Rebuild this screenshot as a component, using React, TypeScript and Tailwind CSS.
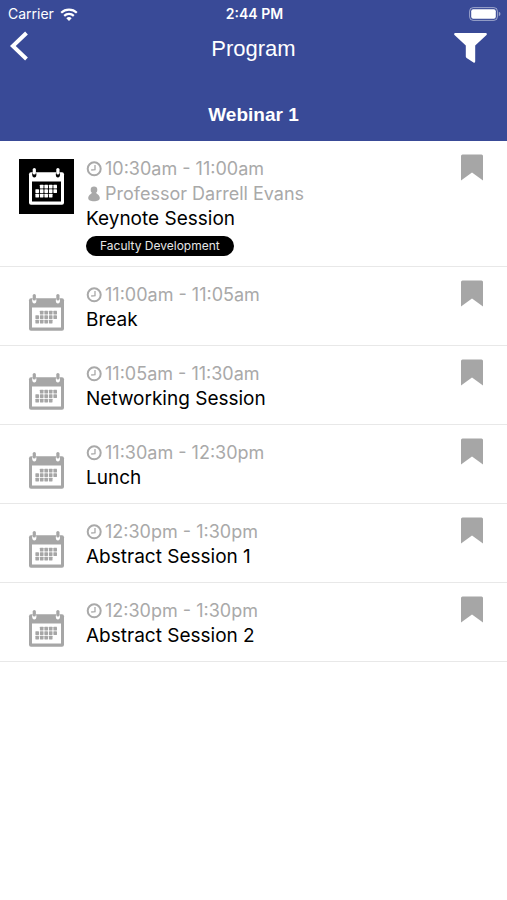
import React, { useState } from "react";

type Session = {
  id: number;
  time: string;
  title: string;
  speaker?: string;
  tag?: string;
};

const sessions: Session[] = [
  {
    id: 1,
    time: "10:30am - 11:00am",
    title: "Keynote Session",
    speaker: "Professor Darrell Evans",
    tag: "Faculty Development",
  },
  { id: 2, time: "11:00am - 11:05am", title: "Break" },
  { id: 3, time: "11:05am - 11:30am", title: "Networking Session" },
  { id: 4, time: "11:30am - 12:30pm", title: "Lunch" },
  { id: 5, time: "12:30pm - 1:30pm", title: "Abstract Session 1" },
  { id: 6, time: "12:30pm - 1:30pm", title: "Abstract Session 2" },
];

// day cells of the calendar, as [column, row]
const days = [
  [1, 0], [2, 0], [3, 0], [4, 0],
  [0, 1], [1, 1], [2, 1], [3, 1], [4, 1],
  [0, 2], [1, 2], [2, 2], [3, 2],
];

const CalendarIcon = ({ active }: { active: boolean }) => {
  const ink = active ? "#ffffff" : "#a6a6a6";
  const paper = active ? "#000000" : "#ffffff";

  return (
    <svg viewBox="0 0 55 55" className="size-[55px] shrink-0" aria-hidden="true">
      <rect width="55" height="55" fill={paper} />
      <rect x="10" y="13.2" width="35" height="32.6" rx="2" fill={ink} />
      <rect x="13" y="22.5" width="29" height="20" fill={paper} />
      {[15.3, 38.9].map((x) => (
        <g key={x}>
          <ellipse cx={x} cy="15.4" rx="2.1" ry="3" fill={paper} />
          <rect x={x - 1.6} y="9" width="3.2" height="6.6" rx="1.6" fill={ink} />
        </g>
      ))}
      {days.map(([col, row]) => (
        <rect
          key={`${col}-${row}`}
          x={16.4 + col * 4.5}
          y={25.8 + row * 4.5}
          width="3.6"
          height="3.6"
          rx="0.4"
          fill={ink}
        />
      ))}
    </svg>
  );
};

const ClockIcon = () => (
  <svg viewBox="0 0 16 16" className="size-4 shrink-0" fill="none" stroke="currentColor" aria-hidden="true">
    <circle cx="8.2" cy="7.8" r="6.5" strokeWidth="2" />
    <path d="M9 4v4.600L5.200 9" strokeWidth="1.3" />
  </svg>
);

const PersonIcon = () => (
  <svg viewBox="0 0 16 16" className="size-4 shrink-0" fill="currentColor" aria-hidden="true">
    <circle cx="8" cy="3.9" r="3.3" />
    <path d="M6.200 6.200h3.600c0.200 0.900 0.800 1.300 1.800 2 1.300 0.900 2.200 2.200 2.200 3.800 0 2.400-2.400 3.200-5.800 3.200s-5.800-0.800-5.800-3.200c0-1.600 0.900-2.900 2.200-3.800 1-0.700 1.600-1.100 1.800-2z" />
  </svg>
);

const StatusBar = () => (
  <div className="grid grid-cols-3 items-center h-7 pl-2 pr-1.5 text-sm">
    <div className="flex items-center gap-1.5">
      <span>Carrier</span>
      <svg viewBox="0 0 18 13" className="w-[18px] h-[13px]" fill="none" stroke="currentColor" strokeWidth="2.2" aria-hidden="true">
        <path d="M1.200 4.700a11.200 11.200 0 0 1 15.600 0" />
        <path d="M4.200 7.900a6.900 6.900 0 0 1 9.600 0" />
        <path d="M9 13L6.300 10.200a3.900 3.900 0 0 1 5.400 0z" fill="currentColor" stroke="none" />
      </svg>
    </div>
    <span className="text-center font-semibold">2:44 PM</span>
    <svg viewBox="0 0 32 14" className="w-8 h-3.5 justify-self-end" aria-hidden="true">
      <rect x="0.600" y="0.600" width="27.800" height="12.800" rx="3.600" fill="none" stroke="#ffffff" strokeOpacity="0.5" />
      <rect x="2.200" y="2.200" width="24.600" height="9.600" rx="2" fill="#ffffff" />
      <path d="M29.800 4.800q1.700 0.600 1.700 2.200t-1.700 2.200z" fill="#ffffff" fillOpacity="0.5" />
    </svg>
  </div>
);

const SessionRow = ({ session }: { session: Session }) => {
  const [saved, setSaved] = useState(false);

  return (
    <li className="flex items-start border-b border-[#e8e8e8] pl-[19px] pr-6">
      <div className="pt-[18px]">
        <CalendarIcon active={Boolean(session.tag)} />
      </div>

      <div className={`flex-1 min-w-0 pl-3 pt-[15px] ${session.tag ? "pb-2.5" : "pb-[13px]"}`}>
        <p className="flex items-center gap-[3px] text-lg leading-[25px] text-[#a9a9a9]">
          <ClockIcon />
          {session.time}
        </p>
        {session.speaker && (
          <p className="flex items-center gap-[3px] text-lg leading-[25px] text-[#a9a9a9]">
            <PersonIcon />
            {session.speaker}
          </p>
        )}
        <h2 className="text-[19px] leading-[25px] text-black">{session.title}</h2>
        {session.tag && (
          <span className="mt-[5px] flex w-fit items-center h-5 px-3.5 rounded-full bg-black text-xs text-[#e6e6e6]">
            {session.tag}
          </span>
        )}
      </div>

      <button
        type="button"
        aria-label={`Bookmark ${session.title}`}
        aria-pressed={saved}
        onClick={() => setSaved(!saved)}
        className={`mt-[13px] ${saved ? "text-[#394a97]" : "text-[#a6a6a6]"}`}
      >
        <svg viewBox="0 0 22 27" className="w-[22px] h-[27px]" fill="currentColor" aria-hidden="true">
          <path d="M1.500 0.500h19Q22 0.500 22 2V26.500L11 18.400 0 26.500V2Q0 0.500 1.500 0.500z" />
        </svg>
      </button>
    </li>
  );
};

const App = () => {
  return (
    <div className="min-h-screen bg-white font-[Inter,sans-serif]">
      <header className="bg-[#394a97] text-white">
        <StatusBar />

        {/* Navigation */}
        <div className="grid grid-cols-3 items-center h-10">
          <button type="button" aria-label="Back" className="justify-self-start pl-2.5 pb-1">
            <svg viewBox="0 0 18 30" className="w-[18px] h-[30px]" fill="none" stroke="currentColor" strokeWidth="4" aria-hidden="true">
              <path d="M16.500 2L2.800 15l13.700 13" />
            </svg>
          </button>
          <h1 className="text-center font-['Liberation_Sans',sans-serif] text-[22px]">Program</h1>
          <button type="button" aria-label="Filter" className="justify-self-end pr-5">
            <svg viewBox="0 0 33 30" className="w-[33px] h-[30px]" fill="currentColor" aria-hidden="true">
              <path d="M1 0h31q1.500 0.500 0.500 2L21.200 12.600V28.500q-0.400 1.800-1.700 1L12.600 25q-0.800-0.600-0.800-1.500V12.600L0.500 2Q-0.500 0.500 1 0z" />
            </svg>
          </button>
        </div>

        <p className="pt-[34px] pb-[14px] text-center font-['Liberation_Sans',sans-serif] text-[19px] leading-[25px] font-bold">
          Webinar 1
        </p>
      </header>

      <ul>
        {sessions.map((session) => (
          <SessionRow key={session.id} session={session} />
        ))}
      </ul>
    </div>
  );
};

export default App;
